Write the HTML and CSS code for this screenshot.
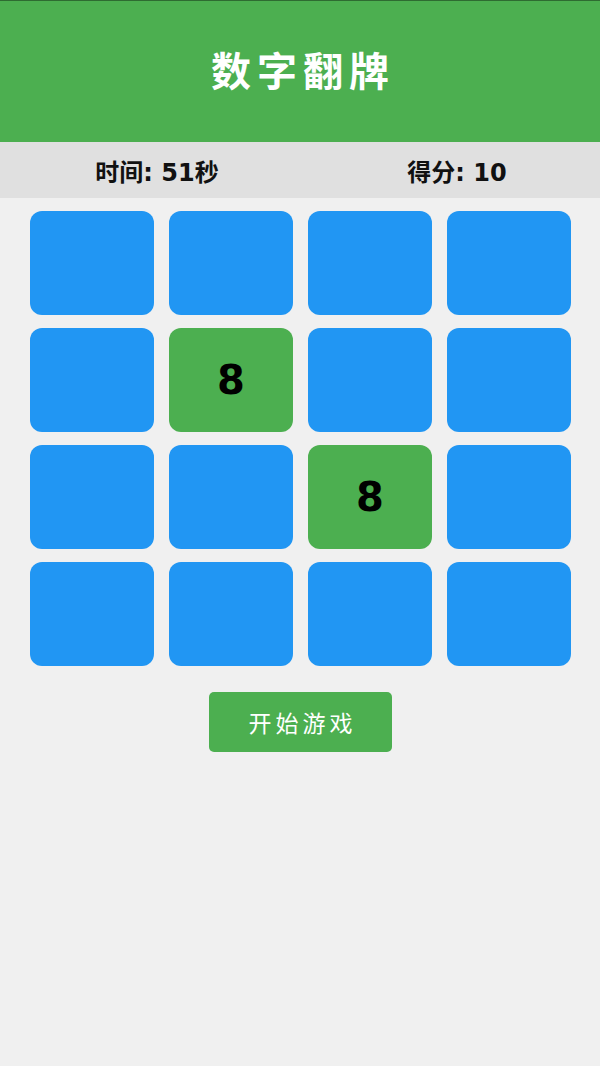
FILE: index.html
```html
<!DOCTYPE html>
<html lang="zh">
<head>
<meta charset="utf-8">
<title>数字翻牌</title>
<link rel="stylesheet" href="styles.css">
</head>
<body>
<header class="header"><h1 class="title">数字翻牌</h1></header>
<div class="info">
  <div class="info-item">时间: 51秒</div>
  <div class="info-item">得分: 10</div>
</div>
<main class="board">
  <div class="tile"></div><div class="tile"></div><div class="tile"></div><div class="tile"></div>
  <div class="tile"></div><div class="tile open">8</div><div class="tile"></div><div class="tile"></div>
  <div class="tile"></div><div class="tile"></div><div class="tile open">8</div><div class="tile"></div>
  <div class="tile"></div><div class="tile"></div><div class="tile"></div><div class="tile"></div>
</main>
<div class="actions"><button class="start">开始游戏</button></div>
</body>
</html>
```
FILE: styles.css
```css
html, body {
  margin: 0;
  padding: 0;
}
body {
  background: #f0f0f0;
  font-family: "DejaVu Sans", "Noto Sans CJK SC", sans-serif;
  width: 600px;
  min-height: 1066px;
}
.header {
  background: #4caf50;
  border-top: 1px solid #2e6b31;
  height: 141px;
  display: flex;
  align-items: center;
  justify-content: center;
}
.title {
  margin: 0;
  color: #fff;
  font-size: 40px;
  font-weight: bold;
  letter-spacing: 6px;
  padding-left: 6px;
  line-height: 1;
}
.info {
  background: #e0e0e0;
  height: 56px;
  display: grid;
  grid-template-columns: 1fr 1fr;
  align-items: center;
  font-size: 24px;
  font-weight: bold;
  color: #111;
}
.info-item {
  text-align: center;
  padding-left: 14px;
}
.board {
  display: grid;
  grid-template-columns: repeat(4, 124px);
  grid-auto-rows: 104px;
  column-gap: 15px;
  row-gap: 13px;
  padding: 13px 0 0 30px;
}
.tile {
  background: #2196f3;
  border-radius: 12px;
  display: flex;
  align-items: center;
  justify-content: center;
  font-size: 40px;
  font-weight: bold;
  color: #000;
}
.tile.open {
  background: #4caf50;
}
.actions {
  display: flex;
  justify-content: center;
  padding: 26px 0 0 1px;
}
.start {
  width: 183px;
  height: 60px;
  background: #4caf50;
  border: none;
  border-radius: 5px;
  color: #fff;
  font-family: "Noto Sans CJK SC", sans-serif;
  font-size: 23px;
  letter-spacing: 4px;
  padding: 0 0 0 4px;
}
```
